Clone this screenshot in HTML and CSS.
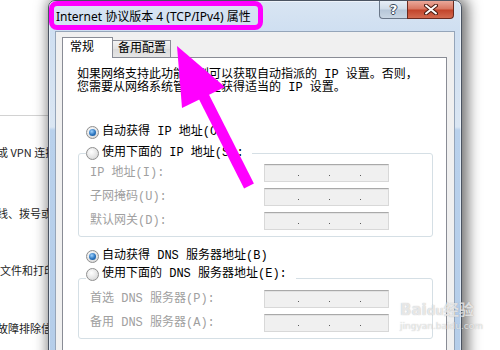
FILE: index.html
```html
<!DOCTYPE html>
<html>
<head>
    <title>Internet 协议版本 4 (TCP/IPv4) 属性</title>
    <link rel="stylesheet" href="styles.css">
</head>
<body>
    <div class="desktop">
        <div class="bg-window">
            <div class="bg-rule"></div>
            <p class="bg-line line1">或 VPN 连接；或设置路由器或访问点。</p>
            <p class="bg-line line2">线、拨号或 VPN 网络连接。</p>
            <p class="bg-line line3">文件和打印机，或更改共享设置。</p>
            <p class="bg-line line4">故障排除信息。</p>
        </div>

        <div class="dialog">
            <div class="titlebar">
                <span class="title">Internet 协议版本 4 (TCP/IPv4) 属性</span>
                <div class="caption-btns">
                    <span class="btn-help">?</span>
                    <span class="btn-close">
                        <svg width="14" height="11" viewBox="0 0 14 11">
                            <path d="M2 1.5 L12 9.5 M12 1.5 L2 9.5" stroke="#4a1c12" stroke-width="4" stroke-linecap="round"/>
                            <path d="M2 1.5 L12 9.5 M12 1.5 L2 9.5" stroke="#fff" stroke-width="2" stroke-linecap="round"/>
                        </svg>
                    </span>
                </div>
            </div>

            <div class="client">
                <div class="tabs">
                    <span class="tab active">常规</span>
                    <span class="tab">备用配置</span>
                </div>
                <div class="panel">
                    <p class="desc">如果网络支持此功能，则可以获取自动指派的 IP 设置。否则，<br>您需要从网络系统管理员处获得适当的 IP 设置。</p>

                    <div class="radio-row"><span class="radio checked"></span>自动获得 IP 地址(O)</div>
                    <fieldset class="group">
                        <legend class="legend-ip"><span class="radio"></span>使用下面的 IP 地址(S):</legend>
                        <div class="field-row"><span class="label">IP 地址(I):</span><span class="ip-box"><i></i><i></i><i></i></span></div>
                        <div class="field-row"><span class="label">子网掩码(U):</span><span class="ip-box"><i></i><i></i><i></i></span></div>
                        <div class="field-row"><span class="label">默认网关(D):</span><span class="ip-box"><i></i><i></i><i></i></span></div>
                    </fieldset>

                    <div class="radio-row dns-auto"><span class="radio checked"></span>自动获得 DNS 服务器地址(B)</div>
                    <fieldset class="group group-dns">
                        <legend class="legend-dns"><span class="radio"></span>使用下面的 DNS 服务器地址(E):</legend>
                        <div class="field-row"><span class="label">首选 DNS 服务器(P):</span><span class="ip-box"><i></i><i></i><i></i></span></div>
                        <div class="field-row"><span class="label">备用 DNS 服务器(A):</span><span class="ip-box"><i></i><i></i><i></i></span></div>
                    </fieldset>
                </div>
            </div>
        </div>

        <!-- annotation drawn over the screenshot -->
        <div class="highlight"></div>
        <svg class="arrow" width="500" height="350" viewBox="0 0 500 350">
            <polygon points="177,46 182,108 225,87" fill="#ff00ff"/>
            <line x1="203" y1="95" x2="249" y2="186" stroke="#ff00ff" stroke-width="11"/>
        </svg>

        <div class="watermark">
            <span class="wm-logo">Bai<b>du</b>经验</span>
            <span class="wm-url">jingyan.baidu.com</span>
        </div>
    </div>
</body>
</html>
```

FILE: styles.css
```css
body {
    margin: 0;
    padding: 0;
    background-color: #fff;
}

.desktop {
    position: relative;
    width: 500px;
    height: 350px;
    overflow: hidden;
}

/* window behind the dialog */
.bg-window {
    position: absolute;
    left: 0;
    top: 0;
    width: 300px;
    height: 350px;
    background-color: #fff;
    font-family: "Noto Sans CJK SC", sans-serif;
    font-size: 11px;
    color: #1e1e1e;
}

.bg-rule {
    margin-top: 115px;
    height: 1px;
    background-color: #d2d2d2;
}

.bg-line {
    margin: 0;
    line-height: 16px;
    white-space: nowrap;
}

.line1 {
    margin-top: 28px;
    margin-left: -3px;
}

.line2 {
    margin-top: 45px;
    margin-left: -3px;
}

.line3 {
    margin-top: 41px;
}

.line4 {
    margin-top: 42px;
    margin-left: -3px;
}

/* the dialog */
.dialog {
    position: absolute;
    left: 48px;
    top: 0;
    width: 414px;
    height: 390px;
    box-sizing: border-box;
    padding: 0 6px;
    border: 1px solid #4b5462;
    border-radius: 7px 7px 0 0;
    background: linear-gradient(#d9e5f3 0px, #cfdff1 30px, #dae6f3 126px, #b9d1ec 129px, #b4cde9 100%);
    box-shadow: 3px 0 14px 3px rgba(0, 0, 0, 0.55), inset 0 0 0 1px rgba(255, 255, 255, 0.55);
}

.titlebar {
    display: flex;
    justify-content: space-between;
    height: 30px;
    margin: 0 -6px;
    padding: 0 6px 0 7px;
}

.title {
    font-family: "Noto Sans", "Noto Sans CJK SC", sans-serif;
    font-size: 12px;
    line-height: 32px;
    color: #000;
    white-space: nowrap;
}

.caption-btns {
    display: flex;
    align-self: flex-start;
    margin-right: 1px;
}

.btn-help,
.btn-close {
    display: flex;
    align-items: center;
    justify-content: center;
    height: 18px;
    box-sizing: border-box;
}

.btn-help {
    width: 28px;
    border: 1px solid #6a7789;
    border-top: none;
    border-right: none;
    border-radius: 0 0 0 4px;
    background: linear-gradient(#e7eef6, #cfdbe8 48%, #b6c6d8 52%, #c9d6e4);
    font-family: "DejaVu Sans", sans-serif;
    font-weight: bold;
    font-size: 13px;
    color: #fff;
    text-shadow: -1px 0 #39475a, 1px 0 #39475a, 0 -1px #39475a, 0 1px #39475a;
}

.btn-close {
    width: 47px;
    border: 1px solid #6b2a1f;
    border-top: none;
    border-radius: 0 0 4px 0;
    background: linear-gradient(#eaa89a, #d87560 48%, #c2432a 52%, #d36a4f);
}

.client {
    height: 400px;
    box-sizing: border-box;
    padding: 5px 7px 0 6px;
    border: 1px solid #95a5b9;
    background-color: #f0f0f0;
    font-family: "Liberation Mono", "Noto Sans CJK SC", monospace;
    font-size: 12px;
    line-height: 13px;
    color: #000;
}

.tabs {
    display: flex;
    align-items: flex-end;
    height: 20px;
}

.tab {
    box-sizing: border-box;
    height: 17px;
    padding: 2px 4px 0 5px;
    border: 1px solid #898c95;
    border-bottom: none;
    border-left: none;
    background: linear-gradient(#f3f3f3, #e3e3e3 50%, #dadada 51%, #e6e6e6);
    white-space: nowrap;
}

.tab.active {
    position: relative;
    z-index: 1;
    width: 51px;
    height: 21px;
    margin-bottom: -1px;
    padding: 4px 0 0 7px;
    border-left: 1px solid #898c95;
    background: #fff;
}

.panel {
    height: 360px;
    box-sizing: border-box;
    padding-top: 11px;
    border: 1px solid #898c95;
    background-color: #fff;
}

.desc {
    margin: 0 0 0 14px;
    white-space: nowrap;
}

.radio-row {
    display: flex;
    align-items: center;
    margin: 31px 0 0 23px;
    white-space: nowrap;
}

.radio-row.dns-auto {
    margin-top: 13px;
}

.radio {
    position: relative;
    display: inline-block;
    flex-shrink: 0;
    width: 13px;
    height: 13px;
    box-sizing: border-box;
    margin-right: 3px;
    border: 1px solid #8f8f8f;
    border-radius: 50%;
    background: radial-gradient(circle at 40% 35%, #ffffff, #dcdcdc 75%);
    vertical-align: top;
}

.radio.checked::after {
    content: "";
    position: absolute;
    left: 2px;
    top: 2px;
    width: 7px;
    height: 7px;
    border-radius: 50%;
    background: radial-gradient(circle at 40% 35%, #9fd3ff, #2a73bd 55%, #0f4d8c);
}

.group {
    margin: 7px 13px 0 15px;
    padding: 0 0 6px 11px;
    border: 1px solid #d5dfe5;
    border-radius: 3px;
}

.group legend {
    display: flex;
    align-items: center;
    margin-left: -4px;
    padding: 0;
    height: 14px;
    white-space: nowrap;
}

.legend-ip {
    padding-right: 8px !important;
}

.group-dns {
    margin-top: 4px;
}

.legend-dns {
    height: auto !important;
    align-items: flex-start !important;
    padding: 1px 9px 8px 0 !important;
    line-height: 13px;
}

.field-row {
    display: flex;
    align-items: center;
    height: 18px;
    margin-top: 6px;
}

.field-row:first-of-type {
    margin-top: 4px;
}

.group-dns .field-row:first-of-type {
    margin-top: 1px;
}

.label {
    width: 174px;
    color: #a0a0a0;
    white-space: nowrap;
}

.ip-box {
    display: flex;
    align-items: flex-end;
    gap: 30px;
    width: 125px;
    height: 18px;
    box-sizing: border-box;
    padding: 0 0 5px 33px;
    border: 1px solid #d8d8d8;
    border-top-color: #a9a9a9;
    background-color: #f0f0f0;
    box-shadow: inset 0 1px 0 #e2e2e2;
}

.ip-box i {
    width: 1px;
    height: 1px;
    background-color: #5c5c5c;
}

/* annotation */
.highlight {
    position: absolute;
    left: 49px;
    top: 1px;
    width: 214px;
    height: 29px;
    box-sizing: border-box;
    border: 5px solid #ff00ff;
    border-radius: 8px;
}

.arrow {
    position: absolute;
    left: 0;
    top: 0;
}

.watermark {
    position: absolute;
    left: 400px;
    top: 301px;
    display: flex;
    flex-direction: column;
    font-family: "DejaVu Sans", "Noto Sans CJK SC", sans-serif;
    color: rgba(255, 255, 255, 0.7);
    text-shadow: 0 0 1px rgba(120, 120, 120, 0.6);
}

.wm-logo {
    font-size: 15px;
    font-weight: bold;
    line-height: 19px;
    white-space: nowrap;
}

.wm-logo b {
    font-size: 12px;
}

.wm-url {
    font-size: 9px;
    line-height: 11px;
}
```
